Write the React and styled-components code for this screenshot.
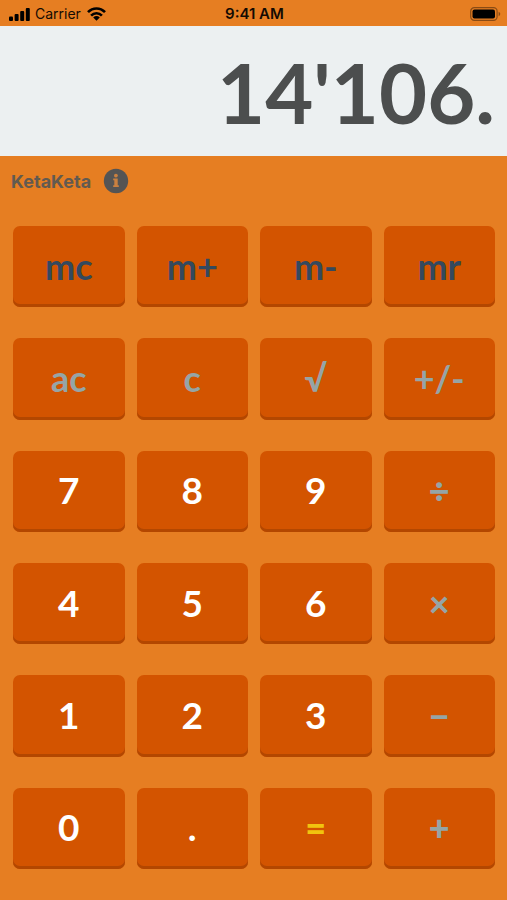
import React from "react";
import styled, { createGlobalStyle } from "styled-components";

const GlobalStyle = createGlobalStyle`
  * {
    box-sizing: border-box;
  }

  body {
    margin: 0;
    background: #e67e22;
  }
`;

const StPage = styled.div`
  display: flex;
  flex-direction: column;
  min-height: 100vh;
  background: #e67e22;
`;

const StStatusBar = styled.header`
  display: grid;
  grid-template-columns: 1fr auto 1fr;
  align-items: center;
  height: 26px;
  padding: 2px 6px 0 8px;
  color: #140b03;
  font-family: Inter, sans-serif;
  font-size: 14px;
  line-height: 20px;
`;

const StCarrier = styled.div`
  display: flex;
  align-items: center;
  gap: 5px;
`;

const StTime = styled.time`
  font-size: 15px;
  font-weight: 600;
`;

const StBattery = styled.svg`
  justify-self: end;
`;

const StDisplay = styled.output`
  display: block;
  height: 130px;
  padding: 16px 12px 0 12px;
  overflow: hidden;
  background: #ecf0f1;
  color: #4c4e4e;
  font-family: Lato, sans-serif;
  font-size: 83px;
  font-weight: 700;
  line-height: 100px;
  text-align: right;
`;

const StTitleBar = styled.div`
  display: flex;
  align-items: center;
  gap: 12px;
  height: 50px;
  padding: 0 11px;
`;

const StTitle = styled.h1`
  margin: 0;
  padding-top: 2px;
  color: #625a50;
  font-family: Inter, sans-serif;
  font-size: 18px;
  font-weight: 700;
  line-height: 24px;
`;

const StInfoButton = styled.button`
  display: flex;
  padding: 0;
  border: none;
  background: none;
  cursor: pointer;
`;

const StKeypad = styled.main`
  display: grid;
  flex: 1;
  grid-template-columns: repeat(4, 1fr);
  grid-auto-rows: 1fr;
  gap: 31px 12px;
  padding: 20px 12px 31px 13px;
`;

const StKey = styled.button`
  padding: 0 0 2px;
  border: none;
  border-radius: 7px;
  background: #d35400;
  box-shadow: inset 0 -3px 0 #b34700;
  color: ${(props) => props.$look.color};
  font-family: Lato, sans-serif;
  font-size: ${(props) => props.$look.size};
  font-weight: ${(props) => props.$look.weight};
  line-height: 46px;
  cursor: pointer;
`;

const looks = {
  memory: { color: "#34495e", size: "36px", weight: 700 },
  edit: { color: "#95a5a6", size: "36px", weight: 700 },
  operator: { color: "#95a5a6", size: "36px", weight: 900 },
  number: { color: "#ffffff", size: "37px", weight: 700 },
  equal: { color: "#f1c40f", size: "36px", weight: 900 },
};

const keys = [
  { label: "mc", type: "memory" },
  { label: "m+", type: "memory" },
  { label: "m-", type: "memory" },
  { label: "mr", type: "memory" },
  { label: "ac", type: "edit" },
  { label: "c", type: "edit" },
  { label: "√", type: "edit" },
  { label: "+/-", type: "edit" },
  { label: "7", type: "number" },
  { label: "8", type: "number" },
  { label: "9", type: "number" },
  { label: "÷", type: "operator" },
  { label: "4", type: "number" },
  { label: "5", type: "number" },
  { label: "6", type: "number" },
  { label: "×", type: "operator" },
  { label: "1", type: "number" },
  { label: "2", type: "number" },
  { label: "3", type: "number" },
  { label: "−", type: "operator" },
  { label: "0", type: "number" },
  { label: ".", type: "number" },
  { label: "=", type: "equal" },
  { label: "+", type: "operator" },
];

const SignalIcon = () => (
  <svg width="22" height="13" viewBox="0 0 22 13" aria-hidden="true">
    <rect x="1" y="8.5" width="4" height="4.5" rx="1" />
    <rect x="6.6" y="6" width="4" height="7" rx="1" />
    <rect x="12.2" y="3" width="4" height="10" rx="1" />
    <rect x="17.8" y="0" width="4" height="13" rx="1" />
  </svg>
);

const WifiIcon = () => (
  <svg width="20" height="14" viewBox="-1 0 20 14" aria-hidden="true">
    <g fill="none" stroke="#000" strokeWidth="2.6">
      <path d="M1 5.2C5.8 0.2 13.2 0.2 18 5.2" />
      <path d="M4.1 8.6C7.2 5.4 11.8 5.4 14.9 8.6" />
    </g>
    <path d="M6.2 10.5C8.2 8.6 10.8 8.6 12.8 10.5L9.5 13.8Z" />
  </svg>
);

const BatteryIcon = () => (
  <StBattery width="31" height="14" viewBox="0 0 31 14" aria-hidden="true">
    <rect
      x="0.7"
      y="0.7"
      width="26.4"
      height="12.6"
      rx="3.6"
      fill="none"
      stroke="#000"
      strokeOpacity="0.4"
      strokeWidth="1.2"
    />
    <rect x="2.5" y="2.5" width="22.5" height="9" rx="2" />
    <path d="M28.6 4.8C30.8 5.6 30.8 8.4 28.6 9.2Z" fillOpacity="0.4" />
  </StBattery>
);

const InfoIcon = () => (
  <svg width="26" height="26" viewBox="0 0 26 26" aria-hidden="true">
    <circle cx="13" cy="13" r="12.2" fill="#545454" />
    <g fill="#c98040">
      <circle cx="12.9" cy="7.6" r="1.9" />
      <path d="M10.2 10.6H14.7V17.3H15.8V19H10.2V17.3H11.3V12.3H10.2Z" />
    </g>
  </svg>
);

const App = () => {
  return (
    <>
      <GlobalStyle />
      <StPage>
        <StStatusBar>
          <StCarrier>
            <SignalIcon />
            <span>Carrier</span>
            <WifiIcon />
          </StCarrier>
          <StTime>9:41 AM</StTime>
          <BatteryIcon />
        </StStatusBar>
        <StDisplay>14'106.</StDisplay>
        <StTitleBar>
          <StTitle>KetaKeta</StTitle>
          <StInfoButton type="button" aria-label="Info">
            <InfoIcon />
          </StInfoButton>
        </StTitleBar>
        <StKeypad>
          {keys.map((key) => (
            <StKey key={key.label} type="button" $look={looks[key.type]}>
              {key.label}
            </StKey>
          ))}
        </StKeypad>
      </StPage>
    </>
  );
};

export default App;
